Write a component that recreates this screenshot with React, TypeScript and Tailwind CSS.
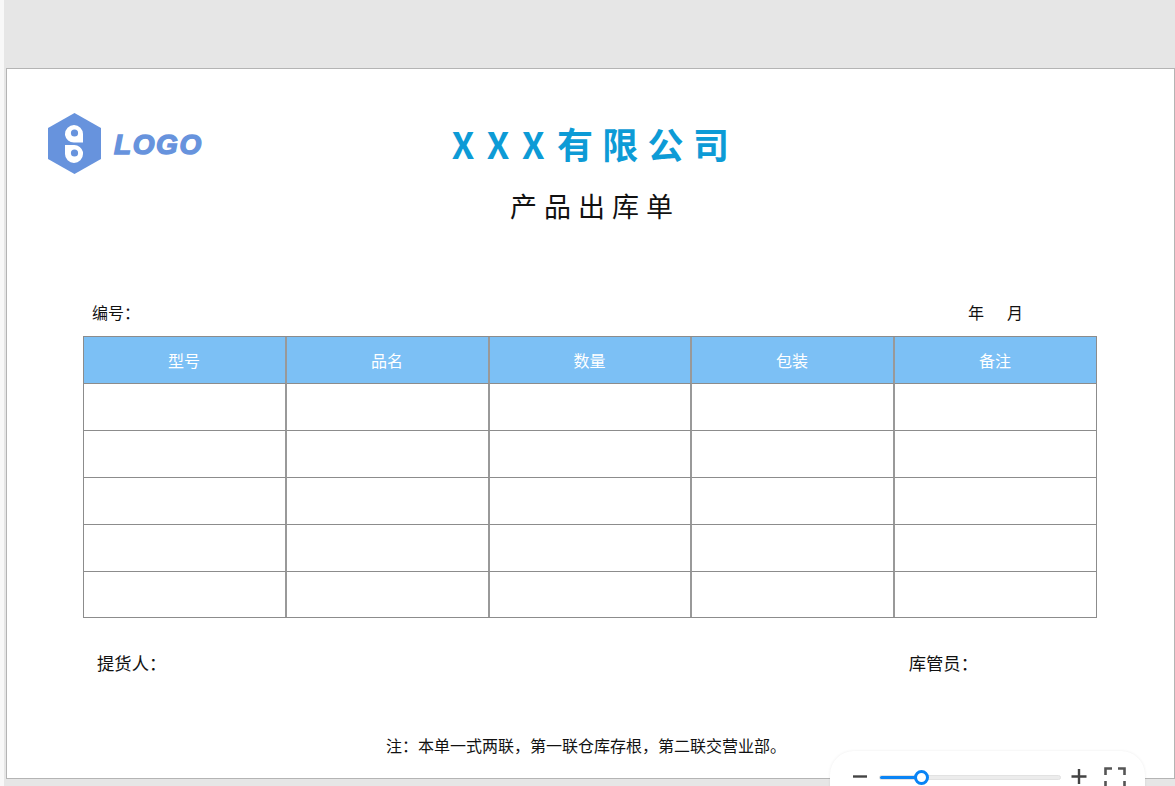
const columns = ["型号", "品名", "数量", "包装", "备注"];
const rowIds = [1, 2, 3, 4, 5];

const LogoMark = () => (
  <svg viewBox="0 0 53 61" className="w-[53px] h-[61px] shrink-0">
    <path d="M26.5 0 L53 15 L53 46 L26.5 61 L0 46 L0 15 Z" fill="#6793dd" />
    <path d="M17 22 V21 A9 9 0 0 1 35 21 V29.5 H26 A9 9 0 0 1 17 22 Z" fill="#fff" />
    <path d="M17 32 H26 A9 9 0 0 1 35 39 V41 A9 9 0 0 1 17 41 Z" fill="#fff" />
    <circle cx="26.5" cy="20" r="3.6" fill="#6793dd" />
    <circle cx="26.5" cy="40" r="3.6" fill="#6793dd" />
  </svg>
);

const ZoomBar = () => (
  <div className="absolute left-[830px] top-[751px] w-[315px] h-[60px] rounded-[24px] bg-white shadow-[0_0_3px_rgba(0,0,0,0.08)] flex items-start pl-[22px] pt-[17px]">
    <svg viewBox="0 0 16 16" className="w-4 h-4 shrink-0">
      <path d="M1 8.5 H15" stroke="#444" strokeWidth="2.4" />
    </svg>
    <div className="relative ml-[11px] w-[182px] h-[5px] mt-[7px] rounded-full bg-[#ececec] border border-[#e2e2e2]">
      <div className="h-[3px] w-[42px] bg-[#0a84f5] rounded-l-full" />
      <div className="absolute left-[34px] top-[-6px] w-[15px] h-[15px] rounded-full bg-white border-[3px] border-[#0a84f5]" />
    </div>
    <svg viewBox="0 0 16 16" className="w-4 h-4 ml-[10px] shrink-0">
      <path d="M0.5 8.5 H15.5 M8 1 V16" stroke="#444" strokeWidth="2.4" />
    </svg>
    <svg viewBox="0 0 22 22" className="w-[22px] h-[22px] ml-[17px] -mt-[1px] shrink-0">
      <path d="M1.5 8 V1.5 H8 M14 1.5 H20.5 V8 M20.5 14 V20.5 H14 M8 20.5 H1.5 V14" fill="none" stroke="#555" strokeWidth="2.6" />
    </svg>
  </div>
);

export default function App() {
  return (
    <div
      className="relative w-[1175px] h-[786px] overflow-hidden bg-[#e6e6e6] pl-[6px] pt-[68px] text-[16px] text-[#111]"
      style={{ fontFamily: '"Noto Sans CJK SC", "Liberation Sans", sans-serif' }}
    >
      <div className="absolute left-0 top-0 w-[4px] h-full bg-[#f8f8f8]" />
      <div className="w-[1169px] h-[711px] bg-white border border-[#b4b4b4]">
        <header className="grid grid-cols-[1fr_auto_1fr] pt-[44px] h-[180px]">
          <div className="flex items-center h-[61px] pl-[41px]">
            <LogoMark />
            <span className="ml-[13px] mt-[2px] text-[28px] leading-none font-bold italic tracking-[1.6px] text-[#6793dd] font-['Liberation_Sans',sans-serif] [-webkit-text-stroke:1.4px_#6793dd]">
              LOGO
            </span>
          </div>
          <div className="flex flex-col items-center pl-[9px]">
            <h1 className="mt-[8px] text-[36px] leading-[44px] font-bold tracking-[9.3px] text-[#0d9bd6] whitespace-nowrap">
              <span className="tracking-[12.5px]">XXX</span>有限公司
            </h1>
            <h2 className="mt-[23px] text-[27px] leading-[36px] tracking-[7px] text-[#111] whitespace-nowrap">
              产品出库单
            </h2>
          </div>
          <div />
        </header>

        <div className="flex justify-between pl-[85px] pr-[151px] pt-[51px] leading-[24px] h-[87px]">
          <span>编号：</span>
          <span className="flex gap-[23px]">
            <span>年</span>
            <span>月</span>
          </span>
        </div>

        <div className="ml-[76px] w-[1014px] border border-[#8c8c8c] grid grid-cols-[203px_203px_202px_203px_1fr]">
          {columns.map((name, i) => (
            <div
              key={name}
              className={`h-[46px] pr-[1px] flex items-center justify-center bg-[#7cc0f5] text-white ${i < 4 ? "border-r-2 border-[#999]" : ""}`}
            >
              {name}
            </div>
          ))}
          {rowIds.map((row) =>
            columns.map((name, i) => (
              <div
                key={`${row}-${name}`}
                className={`${row === 5 ? "h-[46px]" : "h-[47px]"} border-t border-[#8c8c8c] ${i < 4 ? "border-r-2 border-r-[#999]" : ""}`}
              />
            ))
          )}
        </div>

        <div className="flex justify-between pl-[90px] pr-[196px] pt-[33px] text-[17.33px] leading-[24px]">
          <span>提货人：</span>
          <span>库管员：</span>
        </div>

        <p className="mt-[58px] pr-[9px] text-center leading-[24px]">注：本单一式两联，第一联仓库存根，第二联交营业部。</p>
      </div>
      <ZoomBar />
    </div>
  );
}
